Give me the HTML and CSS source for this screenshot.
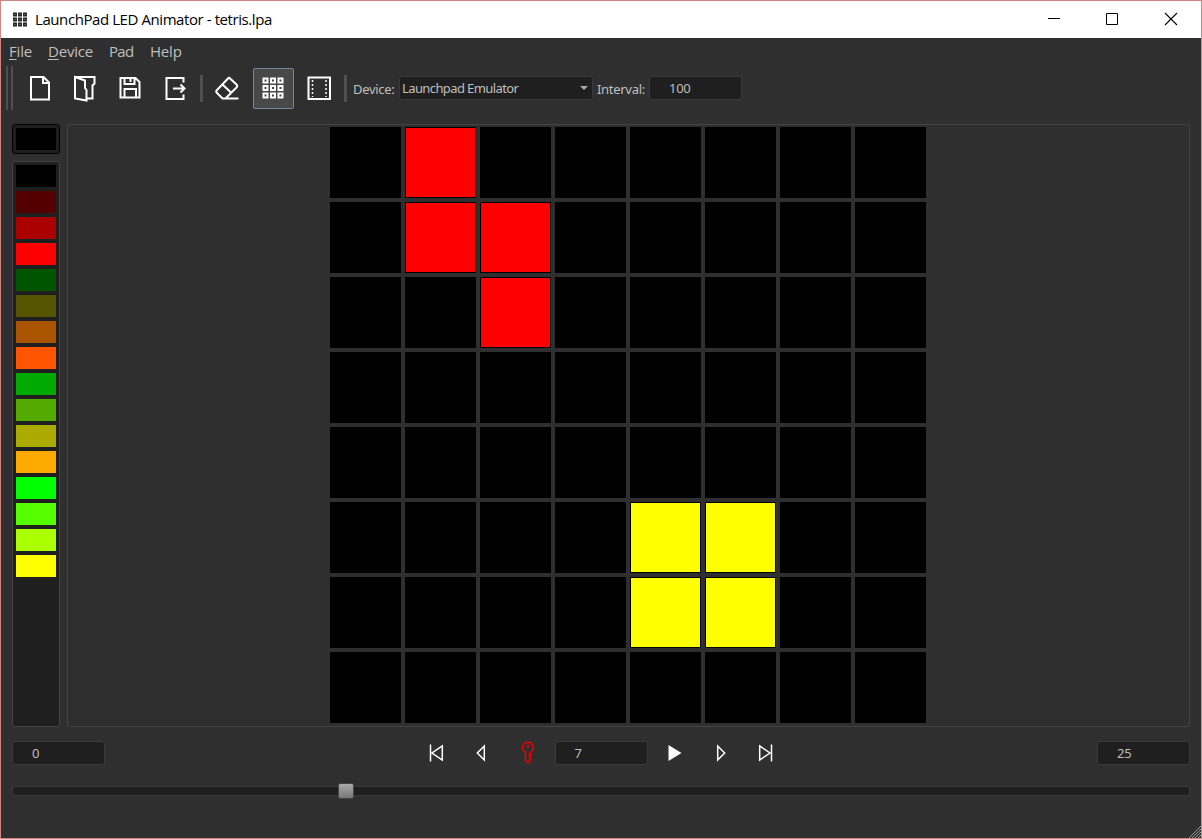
FILE: index.html
```
<!DOCTYPE html>
<html lang="en">
<head>
<meta charset="utf-8">
<title>LaunchPad LED Animator - tetris.lpa</title>
<link rel="stylesheet" href="styles.css">
</head>
<body>
<div class="window">
  <header class="titlebar">
    <svg class="app-icon" width="16" height="16" viewBox="0 0 16 16"><g fill="#888" stroke="#222" stroke-width="1.4"><path d="M1.75 1.25h2.5v2.5h-2.500zM6.750 1.250h2.500v2.500h-2.500zM11.750 1.250h2.500v2.500h-2.500zM1.750 6.250h2.500v2.500h-2.500zM6.750 6.250h2.500v2.500h-2.500zM11.750 6.250h2.500v2.500h-2.500zM1.750 11.250h2.500v2.500h-2.500zM6.750 11.250h2.500v2.500h-2.500zM11.750 11.250h2.500v2.500h-2.500z"/></g></svg>
    <span class="title">LaunchPad LED Animator - tetris.lpa</span>
    <div class="controls">
      <svg width="58" height="37"><path d="M18 17.5h12" stroke="#000"/></svg>
      <svg width="58" height="37"><path d="M18.5 12.5h11v11h-11z" fill="none" stroke="#000"/></svg>
      <svg width="58" height="37"><path d="M19 12l12 12M31 12l-12 12" stroke="#000" stroke-width="1.1"/></svg>
    </div>
  </header>

  <nav class="menu">
    <span class="m-file"><u>F</u>ile</span><span class="m-device"><u>D</u>evice</span><span class="m-pad">Pad</span><span class="m-help">Help</span>
  </nav>

  <div class="toolbar">
    <div class="grip"></div>
    <svg class="tool" viewBox="0 0 41 41"><path d="M11 9h12.500l5.500 5.500V31.500H11zM23 9v6h6"/></svg>
    <svg class="tool" viewBox="0 0 41 41"><path d="M10 9v21.500l11.500 2V22l-1.500-2v-7.500zM10 9h19.500v6.500l-2 2V30.500h-6"/></svg>
    <svg class="tool" viewBox="0 0 41 41"><path d="M10.500 10h15l4 4v15.500h-19zM14.500 10v6h10v-6M14.500 29.500v-8.500h11.500v8.500M20.500 11v3"/></svg>
    <svg class="tool" viewBox="0 0 41 41"><path d="M28.500 14.500V10h-17v21h17v-4.500M18 20.500h11.500M25.500 16.500l4 4-4 4"/></svg>
    <div class="sep"></div>
    <svg class="tool eraser" viewBox="0 0 41 41"><path d="M22 9.500l7.500 7q1.500 1.500 0 3L18.500 30.500h-3l-5.500-5.500q-1.500-1.500 0-3L21 10.500q1-1.500 2 0M15.500 16.500l9 8.500M17 30.500h14.500"/></svg>
    <div class="tool-on"><svg class="tool" viewBox="0 0 41 41"><path d="M10.500 10.500h4v4h-4zM18 10.500h4v4h-4zM25.500 10.500h4v4h-4zM10.500 18h4v4h-4zM18 18h4v4h-4zM25.500 18h4v4h-4zM10.500 25.500h4v4h-4zM18 25.500h4v4h-4zM25.500 25.500h4v4h-4z"/></svg></div>
    <svg class="tool" viewBox="0 0 41 41"><path d="M9.500 9.500h21.500v21.500h-21.500z"/><path class="perf" d="M13.500 12v17M27 12v17"/></svg>
    <div class="sep last"></div>
    <span class="label device-label">Device:</span>
    <div class="field combo"><span>Launchpad Emulator</span><i class="arrow"></i></div>
    <span class="label interval-label">Interval:</span>
    <div class="field"><span class="num">100</span></div>
  </div>

  <main class="work">
    <aside class="side">
      <div class="current"><i class="sw"></i></div>
      <div class="palette">
        <i class="sw"></i><i class="sw r1"></i><i class="sw r2"></i><i class="sw r3"></i>
        <i class="sw g1"></i><i class="sw g1r1"></i><i class="sw g1r2"></i><i class="sw g1r3"></i>
        <i class="sw g2"></i><i class="sw g2r1"></i><i class="sw g2r2"></i><i class="sw g2r3"></i>
        <i class="sw g3"></i><i class="sw g3r1"></i><i class="sw g3r2"></i><i class="sw g3r3"></i>
      </div>
    </aside>
    <section class="canvas">
      <div class="pad">
        <i></i><i class="r3"></i><i></i><i></i><i></i><i></i><i></i><i></i>
        <i></i><i class="r3"></i><i class="r3"></i><i></i><i></i><i></i><i></i><i></i>
        <i></i><i></i><i class="r3"></i><i></i><i></i><i></i><i></i><i></i>
        <i></i><i></i><i></i><i></i><i></i><i></i><i></i><i></i>
        <i></i><i></i><i></i><i></i><i></i><i></i><i></i><i></i>
        <i></i><i></i><i></i><i></i><i class="g3r3"></i><i class="g3r3"></i><i></i><i></i>
        <i></i><i></i><i></i><i></i><i class="g3r3"></i><i class="g3r3"></i><i></i><i></i>
        <i></i><i></i><i></i><i></i><i></i><i></i><i></i><i></i>
      </div>
    </section>
  </main>

  <div class="transport">
    <div class="field"><span class="num">0</span></div>
    <div class="player">
      <svg width="46" height="24" viewBox="413 741 46 24"><path class="line" d="M430.500 744.500v17M442.300 746v14l-10.300-7z"/></svg>
      <svg width="46" height="24" viewBox="459 741 46 24"><path class="line" d="M484.300 746v14l-7-7z"/></svg>
      <svg class="key" width="50" height="24" viewBox="505 741 50 24"><path d="M525.500 752.500a5.400 5.400 0 1 1 5 0v2.500h-1.200l1.200 1.500-1.200 1.500 1.200 1.500-.5 1.500-2 1.800-2.500-2z"/><circle cx="528" cy="746.300" r=".6"/></svg>
      <div class="field"><span class="num">7</span></div>
      <svg width="50" height="24" viewBox="648 741 50 24"><path fill="#fff" d="M668.500 745v16l13-8z"/></svg>
      <svg width="46" height="24" viewBox="698 741 46 24"><path class="line" d="M717.700 746v14l7-7z"/></svg>
      <svg width="46" height="24" viewBox="744 741 46 24"><path class="line" d="M771.500 744.500v17M759.700 746v14l10.300-7z"/></svg>
    </div>
    <div class="field"><span class="num">25</span></div>
  </div>

  <div class="slider"><i class="handle"></i></div>
  <svg class="resize" width="12" height="12"><path d="M0 12L12 0M3 12l9-9M6 12l6-6M9 12l3-3" stroke="#999" stroke-width="1"/></svg>
</div>
</body>
</html>
```
FILE: styles.css
```
* { box-sizing: border-box; }
body { margin: 0; }
i { display: block; }
svg { display: block; flex: none; }

.window {
  position: relative;
  width: 1202px;
  height: 839px;
  border: 1px solid #cf8880;
  background: #2f2f2f;
  color: #bfbfbf;
  font: 13px/16px "Noto Sans", sans-serif;
  display: flex;
  flex-direction: column;
  overflow: hidden;
  white-space: nowrap;
}

.titlebar {
  height: 37px;
  flex: none;
  background: #fff;
  color: #000;
  display: flex;
  align-items: center;
  padding-left: 11px;
}
.title { margin-left: 7px; padding-bottom: 2px; font: 15px/20px "Open Sans", sans-serif; letter-spacing: -0.42px; }
.controls { margin-left: auto; display: flex; }
.controls svg:last-child { width: 55px; }

.menu { display: flex; height: 28px; flex: none; padding: 3px 0 0 8px; font: 15px/20px "Open Sans", sans-serif; letter-spacing: -0.2px; }
.menu u { text-decoration-thickness: 1px; text-underline-offset: 2px; }
.m-file { width: 39px; }
.m-device { width: 61px; }
.m-pad { width: 41px; letter-spacing: -0.7px; }

.toolbar { display: flex; align-items: center; height: 44px; flex: none; padding-left: 5px; }
.grip { width: 7px; height: 44px; margin-right: 7px; border: solid #505050; border-width: 0 2px; }
.tool { width: 41px; height: 41px; margin-right: 4px; fill: none; stroke: #fff; stroke-width: 2; }
.tool .perf { stroke-width: 1.5; stroke-dasharray: 2 2; }
.eraser { margin-right: 5px; }
.tool-on { width: 41px; height: 41px; flex: none; margin-right: 5px; border: 1px solid #7888a0; border-radius: 2px; background: #484848; }
.tool-on .tool { margin: -1px; }
.sep { width: 3px; height: 27px; flex: none; background: #505050; margin-right: 4px; }
.sep.last { margin-right: 6px; }
.label { padding-top: 2px; letter-spacing: -0.3px; }
.device-label { width: 46px; }
.interval-label { width: 52px; margin-left: 4px; }

.field {
  width: 93px;
  height: 24px;
  flex: none;
  border: 1px solid #3a3a3a;
  border-radius: 3px;
  background: #1f1f1f;
  display: flex;
  align-items: center;
}
.num { margin-left: 19px; letter-spacing: -0.3px; }
.combo { width: 194px; padding: 0 4px 0 2px; justify-content: space-between; letter-spacing: -0.6px; }
.arrow { border: 4px solid transparent; border-top-color: #aaa; border-bottom: 0; }

.work { display: flex; gap: 7px; height: 603px; flex: none; margin: 14px 11px 0; }
.side { display: flex; flex-direction: column; gap: 7px; width: 48px; }
.current, .palette { padding: 3px; border-radius: 3px; background: #1f1f1f; }
.current { height: 30px; border: 1px solid #000; }
.palette { flex: 1; border: 1px solid #444; display: flex; flex-direction: column; gap: 4px; }
.sw { width: 40px; height: 22px; background: #000; }
.canvas { flex: 1; border: 1px solid #444; border-radius: 3px; padding: 2px 0 0 262px; }
.pad { display: grid; grid-template-columns: repeat(8, 71px); grid-auto-rows: 71px; gap: 4px; }
.pad i { border: 1px solid #000; background: #000; }

i.r1 { background: #500; }
i.r2 { background: #a00; }
i.r3 { background: #f00; }
i.g1 { background: #050; }
i.g1r1 { background: #550; }
i.g1r2 { background: #a50; }
i.g1r3 { background: #f50; }
i.g2 { background: #0a0; }
i.g2r1 { background: #5a0; }
i.g2r2 { background: #aa0; }
i.g2r3 { background: #fa0; }
i.g3 { background: #0f0; }
i.g3r1 { background: #5f0; }
i.g3r2 { background: #af0; }
i.g3r3 { background: #ff0; }
.pad i.r3 { background: #f00; }
.pad i.g3r3 { background: #ff0; }

.transport { display: flex; justify-content: space-between; margin: 14px 11px 0; }
.player { display: flex; }
.line { fill: none; stroke: #fff; stroke-width: 1.5; }
.key { fill: none; stroke: #f00000; stroke-width: 1.5; }

.slider { position: relative; height: 10px; flex: none; margin: 21px 11px 0; border: 1px solid #3a3a3a; border-radius: 2px; background: #1f1f1f; }
.handle { position: absolute; left: 325px; top: -4px; width: 16px; height: 16px; border: 1px solid #444; border-radius: 2px; background: linear-gradient(#aaa, #777); }
.resize { position: absolute; right: 0; bottom: 0; }
```
